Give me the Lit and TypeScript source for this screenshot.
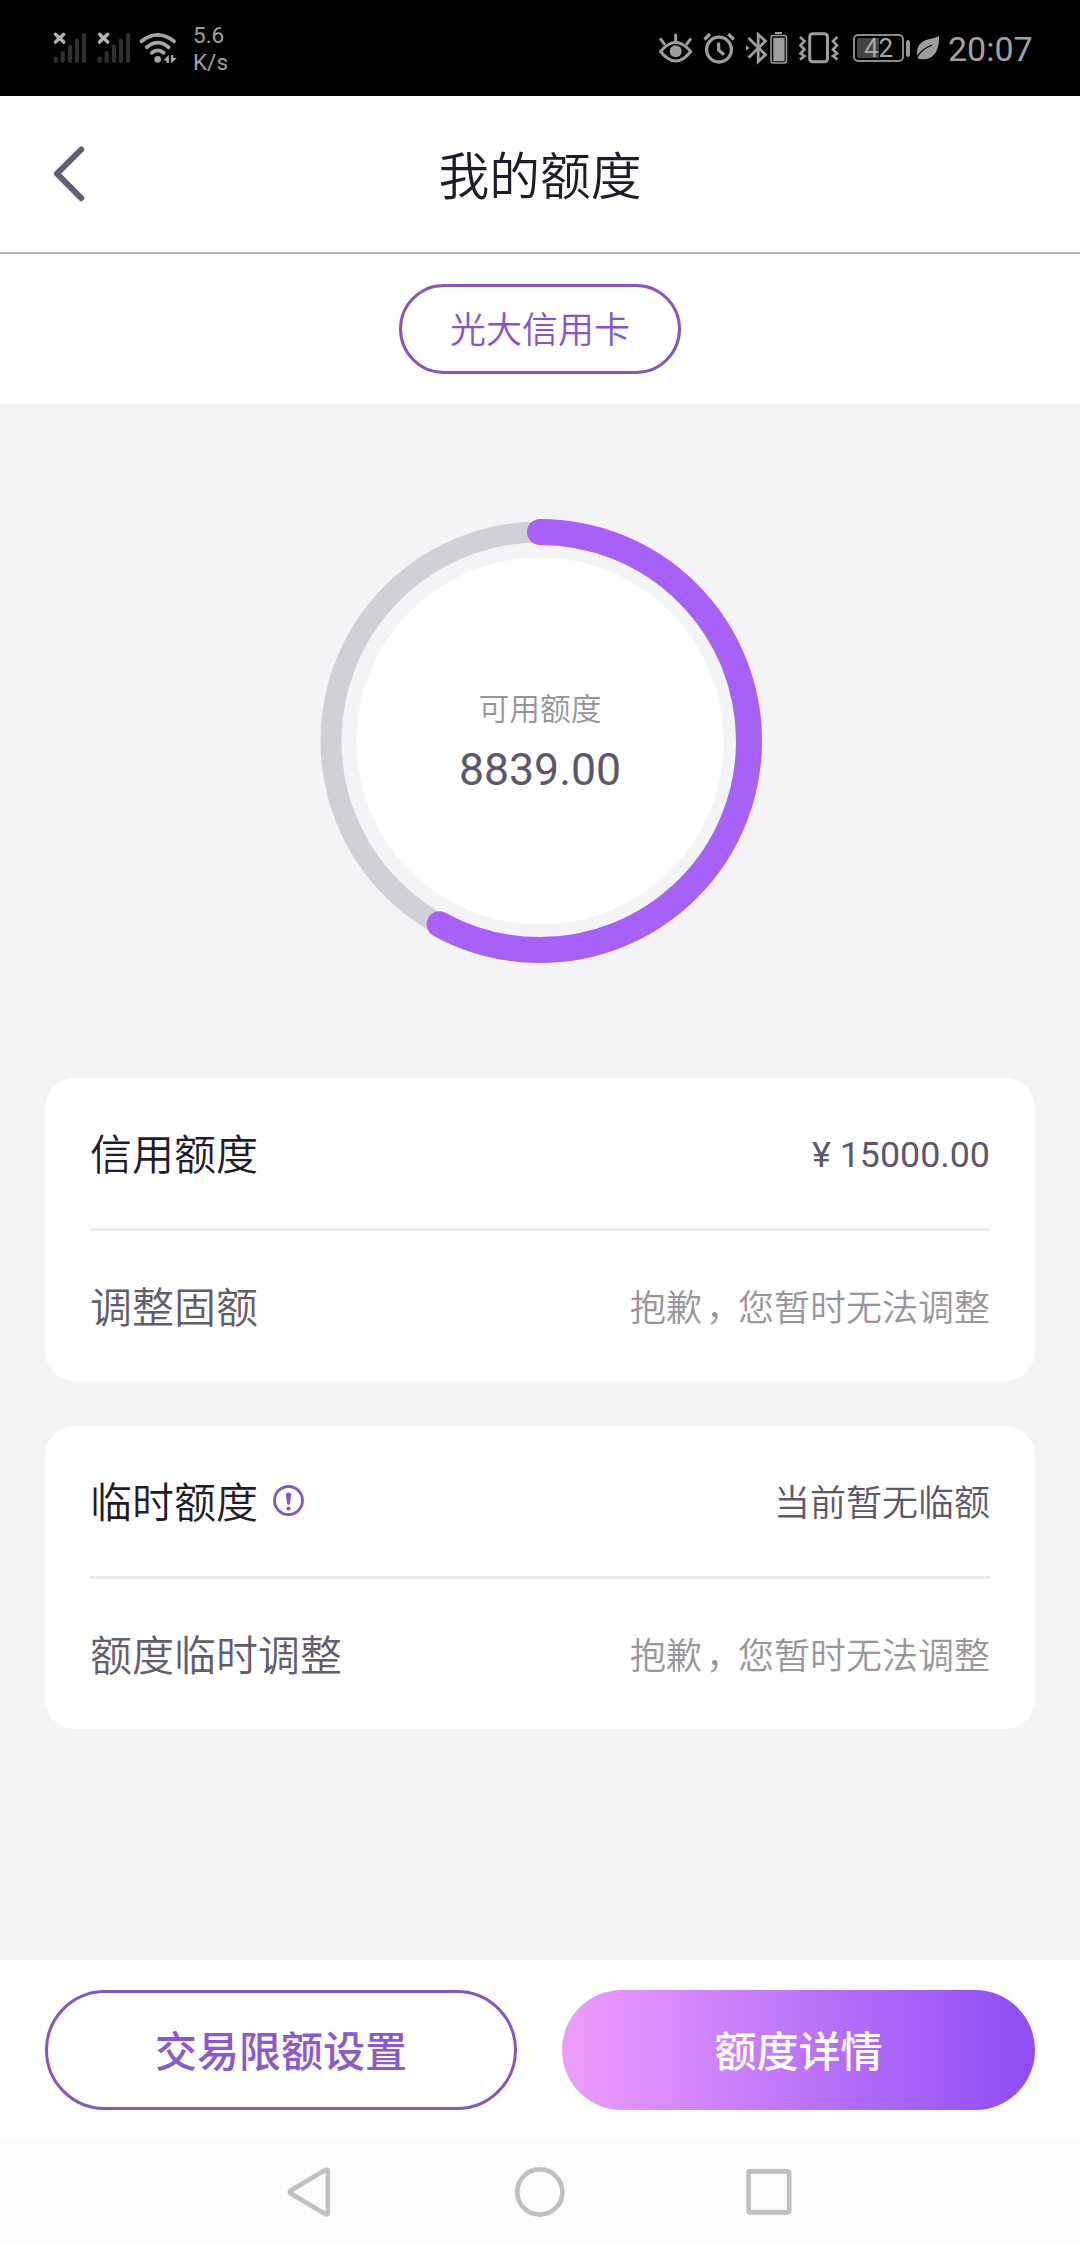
import { LitElement, html, svg, css, nothing } from "lit";
import { customElement, property } from "lit/decorators.js";

const CJK = css`Roboto, "Noto Sans CJK SC", sans-serif`;

@customElement("status-bar")
class StatusBar extends LitElement {
  static styles = css`
    :host { display: block; }
    .bar {
      display: flex; justify-content: space-between; height: 96px; box-sizing: border-box;
      padding: 0 48px 0 52px; background: #000; color: #a0a0a0; font-family: ${CJK};
    }
    .group { display: flex; align-items: center; height: 96px; }
    svg { display: block; flex: none; }
    .gap4 { margin-left: 4px; }
    .gap6 { margin-left: 6px; }
    .gap7 { margin-left: 7px; }
    .gap8 { margin-left: 8px; }
    .speed { margin: 2px 0 0 15px; font-size: 22.5px; line-height: 27px; }
    .battery {
      box-sizing: border-box; width: 51px; height: 28px; margin-left: 12px; border: 2px solid #8a8a8a;
      border-radius: 5px; padding: 2px; display: flex;
    }
    .level {
      flex: 1; display: flex; align-items: center; justify-content: center; font-size: 26px; line-height: 24px;
      background: linear-gradient(90deg, #444 50%, transparent 50%); color: #a8a8a8; border-radius: 2px;
    }
    .nub { width: 4px; height: 17px; margin-left: 2px; border-radius: 2px; background: #999; }
    .time { font-size: 34px; line-height: 40px; margin: 2px 0 0 8px; width: 84px; white-space: nowrap; color: #a2a2a2; }
  `;

  signal(cls: string) {
    const bars = [[55.7, 58.5], [62.7, 53], [70, 46.5], [77, 40.5], [84, 35]];
    return html`<svg class=${cls} width="38" height="96" viewBox="52 0 38 96" fill="none" stroke-linecap="round">
      ${bars.map(([x, y]) => svg`<path d="M${x} ${y}V61" stroke="#2f2f2f" stroke-width="4.2"/>`)}
      <path d="M55.5 34.3l8.2 7.8m0-7.8l-8.2 7.8" stroke="#b4b4b4" stroke-width="3.4"/>
    </svg>`;
  }

  render() {
    return html`<div class="bar">
      <div class="group">
        ${this.signal("")} ${this.signal("gap6")}
        <svg class="gap4" width="40" height="96" viewBox="138 0 40 96" fill="none" stroke="#a6a6a6" stroke-width="3.8" stroke-linecap="round">
          <path d="M141.5 41.3Q157.7 28.5 174 41.3M146.8 47.3Q157.7 38 168.6 47.3M151.8 52.8Q157.7 48 163.6 52.8"/>
          <circle cx="157.7" cy="59.4" r="3.3" fill="#a6a6a6" stroke="none"/>
          <path d="M163.3 60.4L168.9 54.8V63H166.4V60.4ZM170.9 55H173.2V58H176.8L170.9 63.6Z" fill="#a6a6a6" stroke="none"/>
        </svg>
        <div class="speed">5.6<br>K/s</div>
      </div>
      <div class="group">
        <svg width="38" height="96" viewBox="657 0 38 96" fill="none" stroke="#9e9e9e" stroke-width="3" stroke-linecap="round">
          <path d="M660.5 51.5Q675.7 33.5 690.8 51.5Q675.7 70.5 660.5 51.5Z" stroke-linejoin="round"/>
          <circle cx="675.7" cy="51.2" r="6" fill="#9e9e9e" stroke="none"/>
          <path d="M675.7 35V41M660.8 39.3L664.3 43.8M690.3 39.3L686.8 43.8"/>
        </svg>
        <svg class="gap7" width="34" height="96" viewBox="702 0 34 96" fill="none" stroke="#9e9e9e" stroke-width="3.3">
          <circle cx="719" cy="49.6" r="12.4"/>
          <path d="M718.6 42.5V50L724 54.8M704.5 39.5L710 34M728.3 34L733.8 39.5"/>
        </svg>
        <svg class="gap8" width="46" height="96" viewBox="744 0 46 96" fill="none" stroke="#9e9e9e" stroke-width="2.8">
          <path d="M748.5 38L765.5 54.8L758.2 61.5V34.5L765.5 41L748.5 57.8"/>
          <path d="M746 45.2L749.5 48L746 50.8Z" fill="#9e9e9e" stroke="none"/>
          <rect x="771" y="35.5" width="15.5" height="27.5" rx="2.5" stroke-width="1.5"/>
          <path d="M773.3 37.8H784.6V61.2H773.3ZM775 32H782V34H775Z" fill="#9e9e9e" stroke="none"/>
        </svg>
        <svg class="gap7" width="44" height="96" viewBox="797 0 44 96" fill="none" stroke="#9e9e9e" stroke-width="3">
          <rect x="809.7" y="33.8" width="17.8" height="28" rx="3"/>
          <path d="M800 37L804.5 41L800.5 45.5L804.5 49.5L800.5 53.5L804.5 56L800 59.5M837.5 37L833 41L837 45.5L833 49.5L837 53.5L833 56L837.5 59.5" stroke-width="2.6"/>
        </svg>
        <div class="battery"><div class="level">42</div></div>
        <div class="nub"></div>
        <svg class="gap6" width="24" height="96" viewBox="917 0 24 96">
          <path d="M940 35.7C941 48 936 59.5 924 59.3L919.5 59C916.5 52 918 45 924 41.5C929 38.5 935 39 940 35.7Z" fill="#9e9e9e"/>
          <path d="M918.5 56.5C922 50 927 47.5 933 45" stroke="#000" stroke-width="1.2" fill="none"/>
        </svg>
        <div class="time">20:07</div>
      </div>
    </div>`;
  }
}

@customElement("limit-ring")
class LimitRing extends LitElement {
  @property({ type: Number }) fraction = 0;
  @property() label = "";
  @property() amount = "";
  static styles = css`
    :host { display: block; }
    .ring { display: grid; width: 444px; height: 444px; font-family: ${CJK}; }
    .ring > * { grid-area: 1 / 1; }
    .text { display: flex; flex-direction: column; align-items: center; padding-top: 169px; }
    .label { font-size: 30.7px; line-height: 44px; font-weight: 350; color: #969499; }
    .amount { font-size: 44.6px; line-height: 60px; margin-top: 8px; color: #5d5768; }
  `;
  render() {
    const r = 209, c = 2 * Math.PI * r;
    return html`<div class="ring">
      <svg width="444" height="444" viewBox="0 0 444 444" fill="none">
        <circle cx="222" cy="222" r="183.5" fill="#fff"/>
        <circle cx="222" cy="222" r=${r} stroke="#d2cfd7" stroke-width="21"/>
        <circle cx="222" cy="222" r=${r} stroke="#a761f6" stroke-width="26" stroke-linecap="round"
          stroke-dasharray="${c * this.fraction} ${c}" transform="rotate(-90 222 222)"/>
      </svg>
      <div class="text"><div class="label">${this.label}</div><div class="amount">${this.amount}</div></div>
    </div>`;
  }
}

interface Row { label: string; value: unknown; info?: boolean; muted?: boolean; latin?: boolean; }

@customElement("limit-card")
class LimitCard extends LitElement {
  @property({ attribute: false }) rows: Row[] = [];
  static styles = css`
    :host { display: block; }
    .card { background: #fff; border-radius: 30px; padding: 0 45px; font-family: ${CJK}; font-weight: 350; }
    .row { display: flex; align-items: center; height: 150px; box-sizing: border-box; padding-top: 6px; }
    .row + .row { border-top: 3px solid #ebebeb; height: 153px; }
    .label { font-size: 42px; line-height: 60px; color: #1f1b28; }
    .value { margin-left: auto; font-size: 36px; line-height: 52px; color: #5d5768; }
    .latin { font-weight: 400; font-size: 35.8px; margin-top: -2px; }
    .muted .label { color: #635d6b; }
    .muted .value { color: #98969b; }
    .comma { display: inline-block; width: 32px; padding-left: 4px; }
    .info { display: block; margin: 0 0 8px 15px; }
  `;
  render() {
    return html`<div class="card">${this.rows.map((row) => html`
      <div class="row ${row.muted ? "muted" : ""}">
        <span class="label">${row.label}</span>
        ${row.info ? html`<svg class="info" width="31" height="31" viewBox="0 0 31 31">
          <circle cx="15.5" cy="15.5" r="14" fill="none" stroke="#8556c8" stroke-width="2.8"/>
          <path d="M12.8 9.5Q12.8 7.6 15.5 7.6T18.2 9.5L16.9 18.6Q16.7 19.8 15.5 19.8T14.1 18.6Z" fill="#8556c8"/>
          <circle cx="15.5" cy="23.5" r="2.1" fill="#8556c8"/>
        </svg>` : nothing}
        <span class="value ${row.latin ? "latin" : ""}">${row.value}</span>
      </div>`)}</div>`;
  }
}

@customElement("app-root")
class AppRoot extends LitElement {
  static styles = css`
    :host { display: block; }
    .page { display: flex; flex-direction: column; width: 1080px; height: 2244px; background: #fff; font-family: ${CJK}; overflow: hidden; }
    .header {
      display: grid; grid-template-columns: 1fr auto 1fr; align-items: center; height: 158px;
      box-sizing: border-box; border-bottom: 2px solid #b5b5b5; flex: none;
    }
    .back { display: block; margin-left: 48px; }
    .title { font-size: 50.8px; line-height: 70px; font-weight: 350; color: #1f1b28; padding-top: 8px; }
    .tabs { display: flex; justify-content: center; align-items: center; height: 150px; flex: none; }
    .chip {
      display: flex; align-items: center; justify-content: center; width: 282px; height: 90px; box-sizing: border-box;
      border: 3px solid #8556c0; border-radius: 45px; font-size: 36px; line-height: 52px; font-weight: 350; color: #8653cd;
      padding-top: 4px;
    }
    .content { flex: 1; display: flex; flex-direction: column; align-items: center; background: #f4f4f6; padding-top: 115px; }
    .cards { align-self: stretch; display: flex; flex-direction: column; gap: 45px; padding: 115px 45px 0; }
    .actions {
      display: grid; grid-template-columns: 472fr 473fr; gap: 45px; height: 182px; box-sizing: border-box;
      padding: 30px 45px 32px; flex: none;
    }
    .button {
      display: flex; align-items: center; justify-content: center; box-sizing: border-box; border-radius: 60px;
      font-size: 42px; line-height: 60px; font-weight: 500; padding-top: 5px;
    }
    .outline { border: 3px solid #8556c0; color: #8a58d0; }
    .filled { background: linear-gradient(90deg, #ee9cfb, #c57bfa 42%, #8d4cf4); color: #fff; }
    .nav { display: flex; justify-content: center; height: 102px; background: #fcfcfc; flex: none; }
    .nav svg { display: block; }
  `;

  render() {
    const sorry = html`抱歉<span class="comma">，</span>您暂时无法调整`;
    return html`<div class="page">
      <status-bar></status-bar>
      <header class="header">
        <svg class="back" width="42" height="64" viewBox="48 142 42 64" fill="none" stroke="#655d70" stroke-width="6" stroke-linecap="round" stroke-linejoin="round">
          <path d="M81.2 149.5L57 173.7L81.2 198.2"/>
        </svg>
        <div class="title">我的额度</div>
      </header>
      <div class="tabs"><div class="chip">光大信用卡</div></div>
      <main class="content">
        <limit-ring .fraction=${0.5795} label="可用额度" amount="8839.00"></limit-ring>
        <div class="cards">
          <limit-card .rows=${[{ label: "信用额度", value: "¥ 15000.00", latin: true }, { label: "调整固额", value: sorry, muted: true }]}></limit-card>
          <limit-card .rows=${[{ label: "临时额度", value: "当前暂无临额", info: true }, { label: "额度临时调整", value: sorry, muted: true }]}></limit-card>
        </div>
      </main>
      <footer class="actions">
        <div class="button outline">交易限额设置</div>
        <div class="button filled">额度详情</div>
      </footer>
      <nav class="nav">
        <svg width="1080" height="102" viewBox="0 2142 1080 102" fill="none" stroke="#c0c0c0" stroke-width="4.6" stroke-linejoin="round">
          <path d="M326.2 2169.6Q327.8 2169 327.8 2171V2213Q327.8 2215 326.2 2214.4L290.5 2193.2Q289 2192 290.5 2190.8Z"/>
          <circle cx="539.8" cy="2192" r="22.6"/>
          <rect x="748.6" y="2171.4" width="40.6" height="41" rx="1.5"/>
        </svg>
      </nav>
    </div>`;
  }
}
